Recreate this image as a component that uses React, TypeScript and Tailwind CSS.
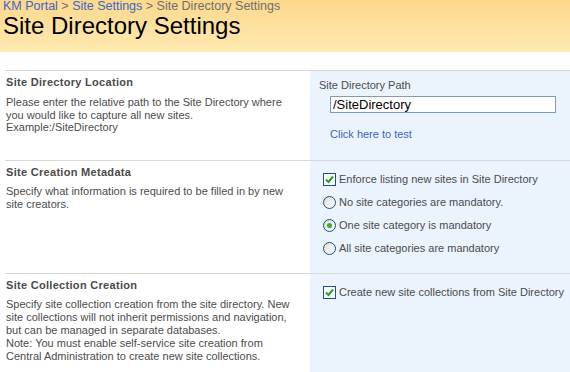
import { useState } from 'react';

const font = { fontFamily: '"Liberation Sans", Arial, sans-serif' };

function CheckBox({ checked }: { checked: boolean }) {
  return (
    <span className="flex items-center justify-center w-[13px] h-[13px] border border-[#1c5180] bg-white shrink-0">
      {checked && (
        <svg width="9" height="9" viewBox="0 0 9 9">
          <path d="M1 4.5 L3.5 7 L8 1.5" stroke="#21a121" strokeWidth="2" fill="none" />
        </svg>
      )}
    </span>
  );
}

function Radio({ checked }: { checked: boolean }) {
  return (
    <span className="flex items-center justify-center w-[13px] h-[13px] rounded-full border border-[#1c5180] bg-gradient-to-br from-[#dcdcd6] to-white shrink-0">
      {checked && <span className="w-[5px] h-[5px] rounded-full bg-[#31b131]"></span>}
    </span>
  );
}

export default function App() {
  const [path, setPath] = useState('/SiteDirectory');
  const [mode, setMode] = useState('one');

  const options = [
    { id: 'none', label: 'No site categories are mandatory.' },
    { id: 'one', label: 'One site category is mandatory' },
    { id: 'all', label: 'All site categories are mandatory' },
  ];

  return (
    <div className="w-[570px] h-[372px] overflow-hidden bg-white text-[11px]" style={font}>
      {/* Header */}
      <div className="h-[52px] bg-gradient-to-b from-[#fcd88c] to-[#fee9b1] pl-[3px]">
        <div className="h-[13px] text-[12.5px] leading-[13px] text-[#3d64c8] whitespace-nowrap">
          KM Portal <span className="text-[#6e6e6e]">&gt;</span> Site Settings{' '}
          <span className="text-[#6e6e6e]">&gt; Site Directory Settings</span>
        </div>
        <h1 className="mt-px text-[24px] leading-[24px] text-black">Site Directory Settings</h1>
      </div>

      <div className="mt-[18px] ml-[5px]">
        {/* Section 1 */}
        <div className="flex border-t border-[#d8d8d8] h-[90px]">
          <div className="w-[305px] pl-px pt-[5px]">
            <h3 className="font-bold text-[#4a4a4a] leading-[13px] tracking-[0.3px]">Site Directory Location</h3>
            <p className="mt-[7px] text-[#4c4c4c] leading-[12.5px]">
              Please enter the relative path to the Site Directory where
              <br />
              you would like to capture all new sites.
              <br />
              Example:/SiteDirectory
            </p>
          </div>
          <div className="flex-1 bg-[#ebf3fd] pl-[9px] pt-[8px]">
            <div className="text-[#4c4c4c] leading-[13px]">Site Directory Path</div>
            <input
              value={path}
              onChange={(e) => setPath(e.target.value)}
              className="mt-[4px] ml-[11px] w-[226px] h-[17px] border border-[#7f9db9] bg-white px-[2px] text-[13px] text-black outline-none"
            />
            <div className="mt-[15px] ml-[11px] text-[#3d64c8] leading-[13px]">Click here to test</div>
          </div>
        </div>

        {/* Section 2 */}
        <div className="flex border-t border-[#d8d8d8] h-[113px]">
          <div className="w-[305px] pl-px pt-[5px]">
            <h3 className="font-bold text-[#4a4a4a] leading-[13px] tracking-[0.3px]">Site Creation Metadata</h3>
            <p className="mt-[6px] text-[#4c4c4c] leading-[12.5px]">
              Specify what information is required to be filled in by new
              <br />
              site creators.
            </p>
          </div>
          <div className="flex-1 bg-[#ebf3fd] pl-[13px] pt-[12px]">
            <div className="flex items-center gap-[3px] h-[13px] text-[#4c4c4c]">
              <CheckBox checked />
              <span>Enforce listing new sites in Site Directory</span>
            </div>
            {options.map((o) => (
              <div
                key={o.id}
                onClick={() => setMode(o.id)}
                className="flex items-center gap-[3px] h-[13px] mt-[10px] text-[#4c4c4c] cursor-pointer"
              >
                <Radio checked={mode === o.id} />
                <span>{o.label}</span>
              </div>
            ))}
          </div>
        </div>

        {/* Section 3 */}
        <div className="flex border-t border-[#d8d8d8] h-[110px]">
          <div className="w-[305px] pl-px pt-[5px]">
            <h3 className="font-bold text-[#4a4a4a] leading-[13px] tracking-[0.3px]">Site Collection Creation</h3>
            <p className="mt-[6px] text-[#4c4c4c] leading-[13px]">
              Specify site collection creation from the site directory. New
              <br />
              site collections will not inherit permissions and navigation,
              <br />
              but can be managed in separate databases.
              <br />
              Note: You must enable self-service site creation from
              <br />
              Central Administration to create new site collections.
            </p>
          </div>
          <div className="flex-1 bg-[#ebf3fd] pl-[13px] pt-[12px]">
            <div className="flex items-center gap-[3px] h-[13px] text-[#4c4c4c]">
              <CheckBox checked />
              <span>Create new site collections from Site Directory</span>
            </div>
          </div>
        </div>
      </div>
    </div>
  );
}
